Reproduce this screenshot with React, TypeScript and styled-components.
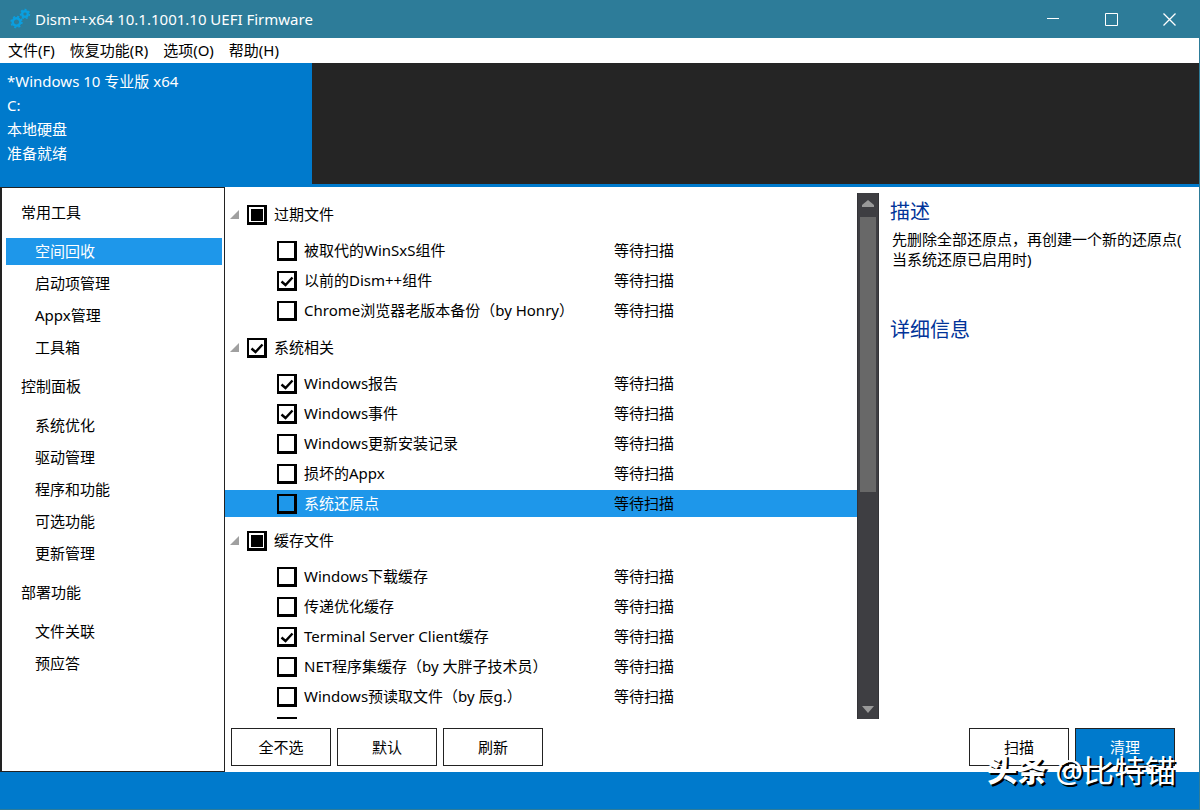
import React, { useEffect, useRef, useState } from 'react';
import styled, { createGlobalStyle } from 'styled-components';

const GlobalStyle = createGlobalStyle`
  * { box-sizing: border-box; }
  body {
    margin: 0;
    background: #fff;
    color: #000;
    font: 15px/20px "Noto Sans", "Noto Sans CJK SC", sans-serif;
  }
  button, input { font: inherit; color: inherit; }
`;

const Window = styled.div`
  position: relative;
  display: flex;
  flex-direction: column;
  height: 100vh;
  border-right: 1px solid #2d7c99;
`;

const TitleBar = styled.header`
  display: flex;
  align-items: center;
  height: 38px;
  flex: none;
  padding: 0 1px 0 8px;
  background: #2d7c99;
  color: #fff;
`;

const Title = styled.h1`
  flex: 1;
  margin: 0;
  padding-left: 4px;
  font-size: 15px;
  font-weight: 400;
`;

const CaptionButton = styled.button`
  display: grid;
  place-items: center;
  width: 58px;
  height: 38px;
  padding: 0;
  border: 0;
  background: none;
`;

const MenuBar = styled.nav`
  display: flex;
  align-items: center;
  flex: none;
  gap: 15px;
  height: 25px;
  padding: 0 8px 2px;
`;

const MenuButton = styled.button`
  padding: 0;
  border: 0;
  background: none;
`;

const SystemStrip = styled.div`
  display: flex;
  flex: none;
  height: 124px;
  background: #252525;
  border-bottom: 3px solid #007acc;
`;

const SystemCard = styled.button`
  display: flex;
  flex-direction: column;
  width: 312px;
  padding: 6px 7px 0;
  border: 0;
  background: #007acc;
  color: #fff;
  line-height: 24px;
  text-align: left;
`;

const Body = styled.div`
  display: flex;
  flex: 1;
  min-height: 0;
`;

const Sidebar = styled.nav`
  flex: none;
  width: 225px;
  padding: 1px 2px 0 4px;
  border: 1px solid #222;
  border-left-width: 2px;
`;

const NavGroup = styled.section`
  display: flex;
  flex-direction: column;
`;

const NavHeading = styled.h2`
  display: flex;
  align-items: center;
  height: 46px;
  margin: 0;
  padding: 0 15px;
  font-size: 15px;
  font-weight: 400;
`;

const NavItem = styled.button<{ $active?: boolean }>`
  display: flex;
  align-items: center;
  width: 100%;
  height: 27px;
  margin: 3px 0 2px;
  padding: 0 29px 2px;
  border: 0;
  background: ${(p) => (p.$active ? '#1e97ea' : 'transparent')};
  color: ${(p) => (p.$active ? '#fff' : '#000')};
`;

const Main = styled.main`
  display: flex;
  flex-direction: column;
  flex: 1;
  min-width: 0;
  padding: 6px 0;
`;

const Content = styled.div`
  display: flex;
  flex: 1;
  min-height: 0;
`;

const List = styled.div`
  flex: 1;
  min-width: 0;
  overflow: hidden;
`;

const Group = styled.section`
  display: flex;
  flex-direction: column;
`;

const GroupHead = styled.div`
  display: flex;
  align-items: center;
  height: 43px;
  padding-left: 5px;
`;

const Expander = styled.button`
  display: block;
  width: 17px;
  height: 12px;
  padding: 0;
  border: 0;
  background: none;
  svg { display: block; }
`;

const Row = styled.div<{ $selected?: boolean }>`
  display: flex;
  align-items: center;
  flex: none;
  height: 27px;
  margin: 1px 0 2px;
  padding-left: 52px;
  background: ${(p) => (p.$selected ? '#1e97ea' : 'transparent')};
  label { color: ${(p) => (p.$selected ? '#fff' : '#000')}; }
`;

const CheckLabel = styled.label`
  display: flex;
  align-items: center;
  flex: none;
  gap: 7px;
  width: 337px;
  white-space: nowrap;
`;

const Caption = styled.span`
  padding-bottom: 2px;
`;

const checkMark = `url("data:image/svg+xml,%3Csvg xmlns='http://www.w3.org/2000/svg' viewBox='0 0 20 20'%3E%3Cpath d='M4.500 10.500L8.500 14L15.500 6.500' fill='none' stroke='%23000' stroke-width='2.400'/%3E%3C/svg%3E")`;

const Check = styled.input`
  appearance: none;
  flex: none;
  width: 20px;
  height: 20px;
  margin: 0;
  border: solid #000;
  border-width: 2px 3px 3px 2px;
  background-origin: border-box;
  &:checked { background-image: ${checkMark}; }
  &:indeterminate {
    background: #000;
    background-clip: content-box;
    padding: 2px 1px 1px 2px;
  }
`;

const ScrollBar = styled.div`
  display: flex;
  flex-direction: column;
  flex: none;
  width: 22px;
  background: #3e3e42;
  border: solid #333337;
  border-width: 0 1px;
`;

const ScrollButton = styled.button`
  display: grid;
  place-items: center;
  height: 20px;
  padding: 0;
  border: 0;
  background: none;
  flex: none;
`;

const Track = styled.div`
  flex: 1;
  padding: 4px 2px 0;
`;

const Thumb = styled.div`
  height: 57%;
  background: #686868;
`;

const Details = styled.aside`
  flex: none;
  width: 320px;
  padding: 9px 14px 0 11px;
`;

const DetailHeading = styled.h2`
  margin: 0;
  color: #003399;
  font-size: 20px;
  font-weight: 400;
  line-height: 20px;
`;

const DetailText = styled.p`
  min-height: 84px;
  margin: 7px 0;
  padding-left: 2px;
  line-break: anywhere;
`;

const Actions = styled.footer`
  display: flex;
  flex: none;
  gap: 6px;
  padding: 9px 24px 0 6px;
`;

const ActionButton = styled.button<{ $primary?: boolean }>`
  width: 100px;
  height: 38px;
  padding: 0;
  border: 1px solid #222;
  background: ${(p) => (p.$primary ? '#007acc' : '#fff')};
  color: ${(p) => (p.$primary ? '#fff' : '#000')};
`;

const Spacer = styled.div`
  flex: 1;
`;

const StatusBar = styled.div`
  flex: none;
  height: 38px;
  background: #007acc;
  border-bottom: 1px solid #2d7c99;
`;

const Watermark = styled.div`
  position: absolute;
  right: 23px;
  bottom: 20px;
  display: flex;
  gap: 8px;
  color: #fff;
  font-size: 31px;
  line-height: 40px;
  white-space: nowrap;
  text-shadow: 2px 2px 0 #000;
  pointer-events: none;
  strong { font-size: 30px; font-weight: 900; }
`;

const nav = [
  { title: '常用工具', items: ['空间回收', '启动项管理', 'Appx管理', '工具箱'] },
  { title: '控制面板', items: ['系统优化', '驱动管理', '程序和功能', '可选功能', '更新管理'] },
  { title: '部署功能', items: ['文件关联', '预应答'] },
];

type State = boolean | 'mixed';
const groups: { title: string; state: State; items: [string, boolean][] }[] = [
  {
    title: '过期文件',
    state: 'mixed',
    items: [
      ['被取代的WinSxS组件', false],
      ['以前的Dism++组件', true],
      ['Chrome浏览器老版本备份（by Honry）', false],
    ],
  },
  {
    title: '系统相关',
    state: true,
    items: [
      ['Windows报告', true],
      ['Windows事件', true],
      ['Windows更新安装记录', false],
      ['损坏的Appx', false],
      ['系统还原点', false],
    ],
  },
  {
    title: '缓存文件',
    state: 'mixed',
    items: [
      ['Windows下载缓存', false],
      ['传递优化缓存', false],
      ['Terminal Server Client缓存', true],
      ['NET程序集缓存（by 大胖子技术员）', false],
      ['Windows预读取文件（by 辰g.）', false],
      ['', false],
    ],
  },
];

function CheckBox({ state, label }: { state: State; label: string }) {
  const ref = useRef<HTMLInputElement>(null);
  const [checked, setChecked] = useState(state === true);
  useEffect(() => {
    if (ref.current) ref.current.indeterminate = state === 'mixed';
  }, [state]);
  return (
    <CheckLabel>
      <Check ref={ref} type="checkbox" checked={checked} onChange={(e) => setChecked(e.target.checked)} />
      <Caption>{label}</Caption>
    </CheckLabel>
  );
}

function Gear({ x, y, r, teeth }: { x: number; y: number; r: number; teeth: number }) {
  return (
    <g transform={`translate(${x} ${y})`} stroke="#0a9fe0" fill="none">
      <circle r={r} strokeWidth="2.4" />
      <circle r={r + 1.6} strokeWidth="1.6" strokeDasharray={`${(Math.PI * (r + 1.6)) / teeth}`} />
    </g>
  );
}

export default function App() {
  const [page, setPage] = useState('空间回收');
  const [selected, setSelected] = useState('系统还原点');
  return (
    <>
      <GlobalStyle />
      <Window>
        <TitleBar>
          <svg width="23" height="22" viewBox="0 0 23 22" aria-hidden="true">
            <Gear x={8.5} y={14} r={3.8} teeth={8} />
            <Gear x={17} y={6} r={2.8} teeth={7} />
          </svg>
          <Title>Dism++x64 10.1.1001.10 UEFI Firmware</Title>
          <CaptionButton aria-label="最小化">
            <svg width="12" height="12" stroke="#fff"><path d="M0 5.500H12" /></svg>
          </CaptionButton>
          <CaptionButton aria-label="最大化">
            <svg width="13" height="13" stroke="#fff" fill="none"><path d="M.5 .5H12.500V12.500H.5Z" /></svg>
          </CaptionButton>
          <CaptionButton aria-label="关闭">
            <svg width="13" height="13" stroke="#fff" strokeWidth="1.3"><path d="M.5 .5L12.500 12.500M12.500 .5L.5 12.500" /></svg>
          </CaptionButton>
        </TitleBar>
        <MenuBar>
          {['文件(F)', '恢复功能(R)', '选项(O)', '帮助(H)'].map((m) => (
            <MenuButton key={m}>{m}</MenuButton>
          ))}
        </MenuBar>
        <SystemStrip>
          <SystemCard>
            <span>*Windows 10 专业版 x64</span>
            <span>C:</span>
            <span>本地硬盘</span>
            <span>准备就绪</span>
          </SystemCard>
        </SystemStrip>
        <Body>
          <Sidebar>
            {nav.map((g) => (
              <NavGroup key={g.title}>
                <NavHeading>{g.title}</NavHeading>
                {g.items.map((i) => (
                  <NavItem key={i} $active={i === page} onClick={() => setPage(i)}>{i}</NavItem>
                ))}
              </NavGroup>
            ))}
          </Sidebar>
          <Main>
            <Content>
              <List>
                {groups.map((g) => (
                  <Group key={g.title}>
                    <GroupHead>
                      <Expander aria-label="折叠">
                        <svg width="10" height="10" viewBox="0 0 10 10"><path d="M9 0V9H0Z" fill="#a0a0a0" /></svg>
                      </Expander>
                      <CheckBox state={g.state} label={g.title} />
                    </GroupHead>
                    {g.items.map(([name, on]) => (
                      <Row key={name} $selected={name === selected} onClick={() => setSelected(name)}>
                        <CheckBox state={on} label={name} />
                        {name && <Caption>等待扫描</Caption>}
                      </Row>
                    ))}
                  </Group>
                ))}
              </List>
              <ScrollBar>
                <ScrollButton aria-label="向上滚动">
                  <svg width="12" height="7"><path d="M6 0L12 5V7H0V5Z" fill="#999" /></svg>
                </ScrollButton>
                <Track><Thumb /></Track>
                <ScrollButton aria-label="向下滚动">
                  <svg width="12" height="7"><path d="M0 0H12L6 7Z" fill="#999" /></svg>
                </ScrollButton>
              </ScrollBar>
              <Details>
                <DetailHeading>描述</DetailHeading>
                <DetailText>先删除全部还原点，再创建一个新的还原点(当系统还原已启用时)</DetailText>
                <DetailHeading>详细信息</DetailHeading>
              </Details>
            </Content>
            <Actions>
              <ActionButton>全不选</ActionButton>
              <ActionButton>默认</ActionButton>
              <ActionButton>刷新</ActionButton>
              <Spacer />
              <ActionButton>扫描</ActionButton>
              <ActionButton $primary>清理</ActionButton>
            </Actions>
          </Main>
        </Body>
        <StatusBar />
        <Watermark>
          <strong>头条</strong>
          <span>@比特锚</span>
        </Watermark>
      </Window>
    </>
  );
}
